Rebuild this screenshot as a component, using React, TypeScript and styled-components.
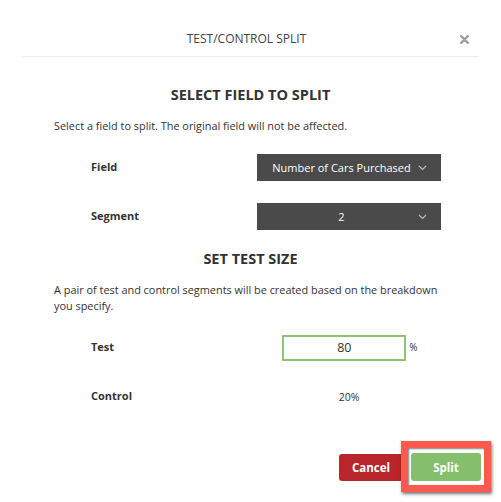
import { FC } from 'react'
import styled, { createGlobalStyle } from 'styled-components'

const GlobalStyle = createGlobalStyle`
  html, body {
    margin: 0;
    padding: 0;
    background: #fff;
  }
  body {
    font-family: 'Open Sans', 'Liberation Sans', sans-serif;
    color: #333;
  }
`

const Modal = styled.div`
  width: 501px;
  height: 502px;
  background: #fff;
  display: flex;
  flex-direction: column;
`

const Header = styled.header`
  height: 57px;
  box-sizing: border-box;
  margin: 0 22px;
  padding-bottom: 8px;
  border-bottom: 1px solid #ececec;
  display: grid;
  grid-template-columns: 1fr auto 1fr;
  align-items: end;
`

const Title = styled.h1`
  grid-column: 2;
  margin: 0 0 0 -8px;
  font-size: 12px;
  line-height: 18px;
  font-weight: 400;
  color: #444;
`

const Close = styled.button`
  grid-column: 3;
  justify-self: end;
  margin: 0 9px 3px 0;
  width: 12px;
  height: 12px;
  padding: 0;
  border: none;
  background: none;
  display: flex;
  align-items: center;
  justify-content: center;
  cursor: pointer;
`

const Body = styled.div`
  padding: 0 54px;
`

const SectionTitle = styled.h2<{ $top: number }>`
  margin: ${(p) => p.$top}px 0 0;
  text-align: center;
  font-size: 14.5px;
  font-weight: 700;
  color: #333;
  line-height: 22px;
`

const Text = styled.p<{ $top: number }>`
  margin: ${(p) => p.$top}px 0 0;
  font-size: 10.9px;
  line-height: 16px;
  color: #333;
`

const Rows = styled.div<{ $top: number }>`
  margin-top: ${(p) => p.$top}px;
  padding-left: 37px;
  display: grid;
  grid-auto-rows: 27px;
  row-gap: 22px;
`

const Row = styled.div`
  display: grid;
  grid-template-columns: 166px 184px;
  align-items: center;
`

const Label = styled.div`
  font-size: 11px;
  font-weight: 700;
  color: #333;
  margin-top: -2px;
`

const Select = styled.div`
  height: 27px;
  background: #4a4a4a;
  color: #fff;
  font-size: 11px;
  display: grid;
  grid-template-columns: 1fr 18px;
  align-items: center;
  padding-left: 8px;
  padding-right: 5px;
  box-sizing: border-box;
  cursor: pointer;
`

const SelectValue = styled.span`
  text-align: center;
`

const Value = styled.div`
  display: flex;
  justify-content: center;
  align-items: center;
  font-size: 10.5px;
  color: #333;
`

const Input = styled.input`
  width: 124px;
  height: 26px;
  box-sizing: border-box;
  border: 2px solid #8cc474;
  outline: none;
  text-align: center;
  font-family: 'Open Sans', 'Liberation Sans', sans-serif;
  font-size: 12.5px;
  color: #333;
  padding: 0;
  margin-left: 2px;
`

const Unit = styled.span`
  font-size: 10px;
  margin-left: 3px;
  margin-top: -2px;
`

const Footer = styled.footer`
  margin-top: auto;
  padding: 0 10px 10px 0;
  display: flex;
  justify-content: flex-end;
  align-items: center;
`

const Button = styled.button<{ $color: string }>`
  height: 27px;
  padding: 0;
  border: none;
  border-radius: 3px;
  background: ${(p) => p.$color};
  color: #fff;
  font-family: 'Open Sans', 'Liberation Sans', sans-serif;
  font-size: 11.5px;
  font-weight: 700;
  cursor: pointer;
`

const CancelButton = styled(Button)`
  width: 64px;
  margin-right: -2px;
  margin-top: 1px;
`

const SplitButton = styled(Button)`
  width: 70px;
  height: 28px;
`

const Highlight = styled.div`
  border: 7px solid #fb5a4c;
  padding: 5px 3px 4px 3px;
  background: #fff;
  box-shadow: 1px 2px 3px rgba(0, 0, 0, 0.55), inset 1px 1px 2px rgba(0, 0, 0, 0.5);
  position: relative;
`

const Chevron: FC = () => (
  <svg width="9" height="6" viewBox="0 0 9 6">
    <polyline points="1,1 4.5,4.5 8,1" fill="none" stroke="#bdbdbd" strokeWidth="1.1" />
  </svg>
)

const CloseIcon: FC = () => (
  <svg width="9" height="9" viewBox="0 0 9 9">
    <path d="M1.2 1.2 L7.8 7.8 M7.8 1.2 L1.2 7.8" stroke="#a0a0a0" strokeWidth="2.4" strokeLinecap="round" />
  </svg>
)

export default function App() {
  return (
    <>
      <GlobalStyle />
      <Modal>
        <Header>
          <Title>TEST/CONTROL SPLIT</Title>
          <Close aria-label="close"><CloseIcon /></Close>
        </Header>
        <Body>
          <SectionTitle $top={27}>SELECT FIELD TO SPLIT</SectionTitle>
          <Text $top={12}>Select a field to split. The original field will not be affected.</Text>
          <Rows $top={20}>
            <Row>
              <Label>Field</Label>
              <Select>
                <SelectValue>Number of Cars Purchased</SelectValue>
                <Chevron />
              </Select>
            </Row>
            <Row>
              <Label>Segment</Label>
              <Select>
                <SelectValue>2</SelectValue>
                <Chevron />
              </Select>
            </Row>
          </Rows>
          <SectionTitle $top={18}>SET TEST SIZE</SectionTitle>
          <Text $top={12}>A pair of test and control segments will be created based on the breakdown you specify.</Text>
          <Rows $top={20}>
            <Row>
              <Label>Test</Label>
              <Value>
                <Input defaultValue="80" />
                <Unit>%</Unit>
              </Value>
            </Row>
            <Row>
              <Label>Control</Label>
              <Value>20%</Value>
            </Row>
          </Rows>
        </Body>
        <Footer>
          <CancelButton $color="#b8262c">Cancel</CancelButton>
          <Highlight>
            <SplitButton $color="#86bf6b">Split</SplitButton>
          </Highlight>
        </Footer>
      </Modal>
    </>
  )
}
